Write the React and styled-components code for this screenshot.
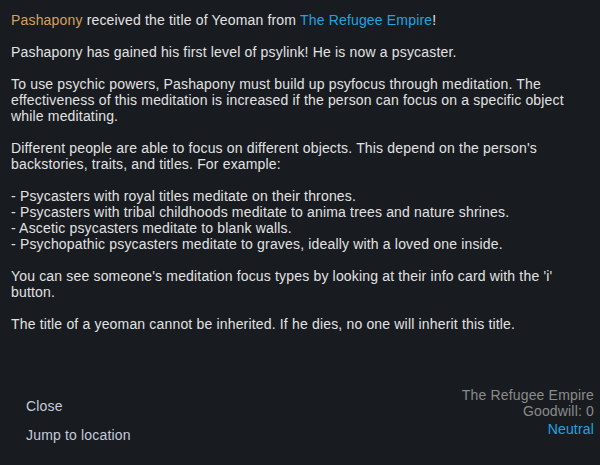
import React from "react";
import styled, { createGlobalStyle } from "styled-components";

const GlobalStyle = createGlobalStyle`
    html, body {
        margin: 0;
        padding: 0;
        background: #181b20;
    }
    #root {
        height: 465px;
    }
`;

const Window = styled("div")`
    box-sizing: border-box;
    width: 600px;
    height: 465px;
    background: #181b20;
    font-family: "Liberation Sans", Arial, sans-serif;
    font-size: 14px;
    line-height: 16px;
    letter-spacing: 0.17px;
    color: #e2e2e2;
    display: flex;
    flex-direction: column;
    justify-content: space-between;
    padding: 12px 6px 22px 11px;
`;

const Body = styled("div")`
    display: flex;
    flex-direction: column;
    gap: 16px;
`;

const Paragraph = styled("p")`
    margin: 0;
`;

const Name = styled("span")`
    color: ${props => props.faction ? "#1ea5e0" : "#d6a15f"};
`;

const Footer = styled("div")`
    display: flex;
    justify-content: space-between;
    align-items: flex-start;
`;

const Buttons = styled("div")`
    display: flex;
    flex-direction: column;
    gap: 13px;
    padding: 11px 0 0 15px;
`;

const TextButton = styled("button")`
    background: none;
    border: none;
    padding: 0;
    text-align: left;
    font-family: inherit;
    font-size: 14px;
    line-height: 16px;
    letter-spacing: inherit;
    color: #c6cbdc;
    cursor: pointer;
`;

const FactionInfo = styled("div")`
    display: flex;
    flex-direction: column;
    align-items: flex-end;
    color: #8b8b8b;
`;

const Relation = styled("div")`
    color: #1ea5e0;
    margin-top: 2px;
`;

const examples = [
    "- Psycasters with royal titles meditate on their thrones.",
    "- Psycasters with tribal childhoods meditate to anima trees and nature shrines.",
    "- Ascetic psycasters meditate to blank walls.",
    "- Psychopathic psycasters meditate to graves, ideally with a loved one inside.",
];

export default function App() {
    return (
        <>
            <GlobalStyle />
            <Window>
                <Body>
                    <Paragraph>
                        <Name>Pashapony</Name> received the title of Yeoman from <Name faction>The Refugee Empire</Name>!
                    </Paragraph>
                    <Paragraph>Pashapony has gained his first level of psylink! He is now a psycaster.</Paragraph>
                    <Paragraph>
                        To use psychic powers, Pashapony must build up psyfocus through meditation. The
                        effectiveness of this meditation is increased if the person can focus on a specific object
                        while meditating.
                    </Paragraph>
                    <Paragraph>
                        Different people are able to focus on different objects. This depend on the person's
                        backstories, traits, and titles. For example:
                    </Paragraph>
                    <Paragraph>
                        {examples.map((line, i) => (
                            <React.Fragment key={i}>
                                {line}
                                <br />
                            </React.Fragment>
                        ))}
                    </Paragraph>
                    <Paragraph>
                        You can see someone's meditation focus types by looking at their info card with the 'i'
                        button.
                    </Paragraph>
                    <Paragraph>The title of a yeoman cannot be inherited. If he dies, no one will inherit this title.</Paragraph>
                </Body>
                <Footer>
                    <Buttons>
                        <TextButton>Close</TextButton>
                        <TextButton>Jump to location</TextButton>
                    </Buttons>
                    <FactionInfo>
                        <div>The Refugee Empire</div>
                        <div>Goodwill: 0</div>
                        <Relation>Neutral</Relation>
                    </FactionInfo>
                </Footer>
            </Window>
        </>
    );
}
